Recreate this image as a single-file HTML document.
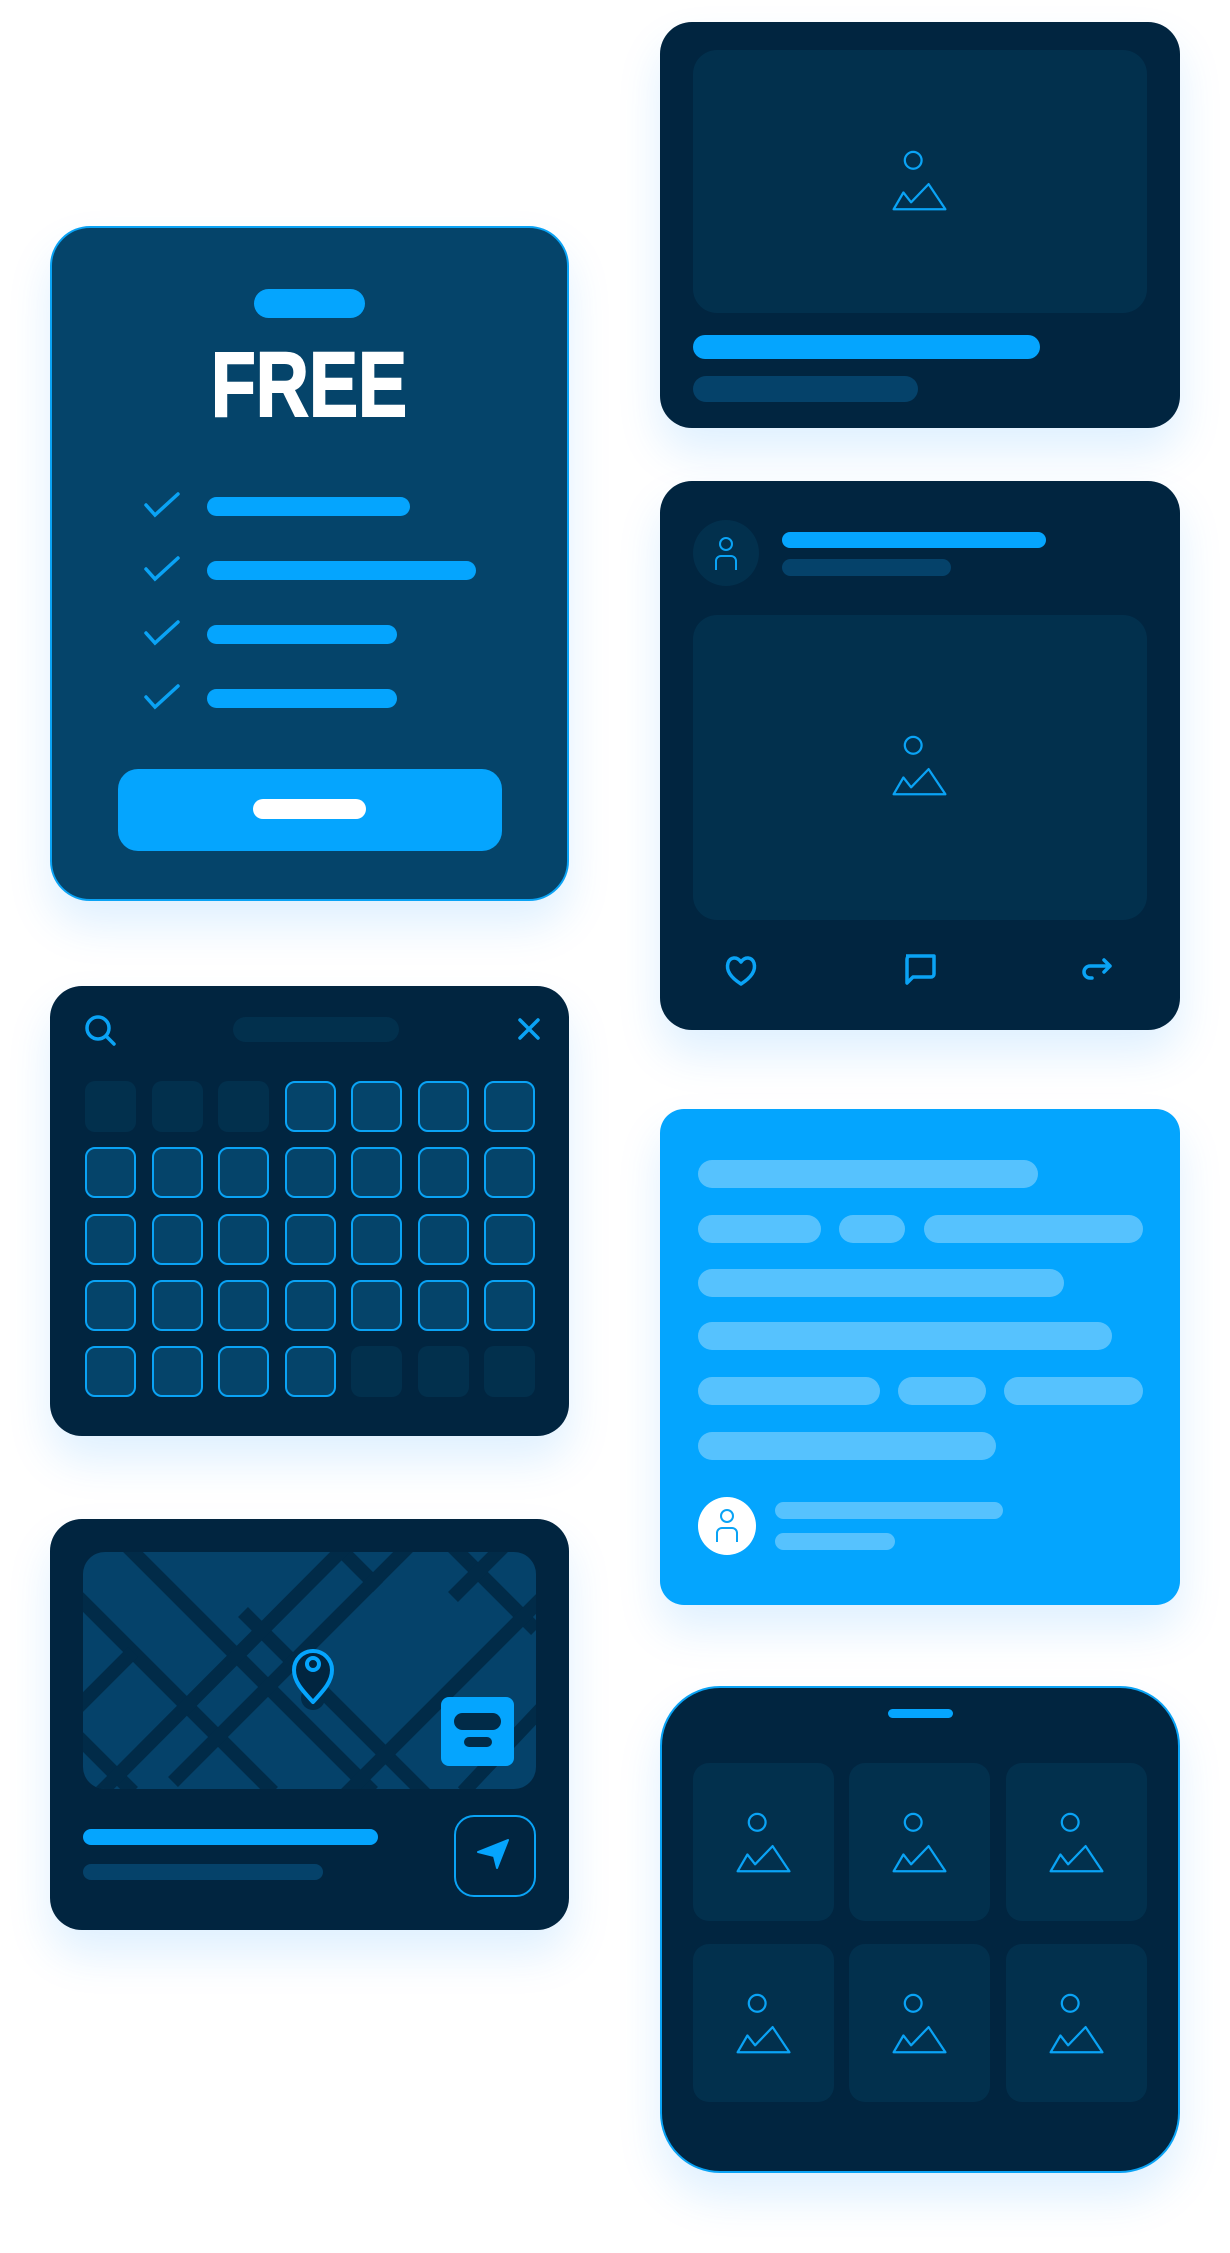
<!DOCTYPE html>
<html><head><meta charset="utf-8"><style>
*{margin:0;padding:0;box-sizing:border-box}
body{width:1230px;height:2253px;background:#fff;position:relative;overflow:hidden;font-family:"Liberation Sans",sans-serif}
.a{position:absolute}
.card{position:absolute;background:#012540;border-radius:32px;box-shadow:0 24px 44px rgba(0,140,255,0.13)}
.pill{position:absolute;border-radius:20px}
.b{background:#05a5fe}
.d{background:#05426a}
.l{background:#56c2fe}
.img{position:absolute;background:#02304d;border-radius:24px}
.cell{position:absolute;width:51px;height:51px;border-radius:10px}
.on{background:#05446a;border:2px solid #0aa3f5}
.off{background:#02304d}
</style></head><body>

<!-- pricing -->
<div class="card" style="left:50px;top:226px;width:519px;height:675px;background:#05446a;border:2px solid #0aa3f5;border-radius:40px"></div>
<div class="pill b" style="left:254px;top:289px;width:111px;height:29px"></div>
<div class="a" style="left:159px;top:335px;width:300px;text-align:center;font-weight:bold;font-size:92px;line-height:100px;color:#fff;transform:scaleX(0.8);-webkit-text-stroke:2px #fff">FREE</div>
<svg class="a" style="left:140px;top:490px" width="50" height="230" viewBox="0 0 50 230">
<g fill="none" stroke="#0aa3f5" stroke-width="3.5" stroke-linecap="round">
<path d="M6 15 L15 25 L38 4"/><path d="M6 79 L15 89 L38 68"/><path d="M6 143 L15 153 L38 132"/><path d="M6 207 L15 217 L38 196"/></g></svg>
<div class="pill b" style="left:207px;top:497px;width:203px;height:19px"></div>
<div class="pill b" style="left:207px;top:561px;width:269px;height:19px"></div>
<div class="pill b" style="left:207px;top:625px;width:190px;height:19px"></div>
<div class="pill b" style="left:207px;top:689px;width:190px;height:19px"></div>
<div class="a b" style="left:118px;top:769px;width:384px;height:82px;border-radius:20px"></div>
<div class="pill" style="left:253px;top:799px;width:113px;height:20px;background:#fff"></div>

<!-- card1 -->
<div class="card" style="left:660px;top:22px;width:520px;height:406px"></div>
<div class="img" style="left:693px;top:50px;width:454px;height:263px"></div>
<svg class="a" style="left:888px;top:142px" width="84" height="73" viewBox="0 0 60 52"><g fill="none" stroke="#0aa3f5" stroke-width="1.6" stroke-linejoin="round"><circle cx="18" cy="13" r="6"/><path d="M4 48 L11 36 L16.5 43 L29 30 L41 48 Z"/></g></svg>
<div class="pill b" style="left:693px;top:335px;width:347px;height:24px"></div>
<div class="pill d" style="left:693px;top:376px;width:225px;height:26px"></div>

<!-- card2 -->
<div class="card" style="left:660px;top:481px;width:520px;height:549px"></div>
<div class="a" style="left:693px;top:520px;width:66px;height:66px;border-radius:50%;background:#02304d"></div>
<svg class="a" style="left:710px;top:533px" width="32" height="40" viewBox="0 0 32 40"><g fill="none" stroke="#0aa3f5" stroke-width="2"><circle cx="16" cy="11" r="6"/><path d="M6 37 V28 a5 5 0 0 1 5 -5 h10 a5 5 0 0 1 5 5 V37"/></g></svg>
<div class="pill b" style="left:782px;top:532px;width:264px;height:16px"></div>
<div class="pill d" style="left:782px;top:559px;width:169px;height:17px"></div>
<div class="img" style="left:693px;top:615px;width:454px;height:305px"></div>
<svg class="a" style="left:888px;top:727px" width="84" height="73" viewBox="0 0 60 52"><g fill="none" stroke="#0aa3f5" stroke-width="1.6" stroke-linejoin="round"><circle cx="18" cy="13" r="6"/><path d="M4 48 L11 36 L16.5 43 L29 30 L41 48 Z"/></g></svg>
<svg class="a" style="left:722px;top:950px" width="40" height="40" viewBox="0 0 40 40"><path d="M19 34 C8 27 4 20 6 13 C8 7 15 6 19 12 C23 6 30 7 32 13 C34 20 30 27 19 34 Z" fill="none" stroke="#0aa3f5" stroke-width="3.5" stroke-linejoin="round"/></svg>
<svg class="a" style="left:900px;top:950px" width="40" height="40" viewBox="0 0 40 40"><path d="M6 6 H34 V24 a3 3 0 0 1 -3 3 H13 L7 33 V9 a3 3 0 0 1 3 -3" fill="none" stroke="#0aa3f5" stroke-width="3.5" stroke-linejoin="round"/></svg>
<svg class="a" style="left:1076px;top:950px" width="40" height="40" viewBox="0 0 40 40"><path d="M28 10 L34 16 L28 22 M34 16 H14 a6 6 0 0 0 0 12 h2" fill="none" stroke="#0aa3f5" stroke-width="3.5" stroke-linecap="round" stroke-linejoin="round"/></svg>

<!-- blue text card -->
<div class="card" style="left:660px;top:1109px;width:520px;height:496px;background:#04a5fe;border-radius:24px"></div>
<div class="pill l" style="left:698px;top:1160px;width:340px;height:28px"></div>
<div class="pill l" style="left:698px;top:1215px;width:123px;height:28px"></div>
<div class="pill l" style="left:839px;top:1215px;width:66px;height:28px"></div>
<div class="pill l" style="left:924px;top:1215px;width:219px;height:28px"></div>
<div class="pill l" style="left:698px;top:1269px;width:366px;height:28px"></div>
<div class="pill l" style="left:698px;top:1322px;width:414px;height:28px"></div>
<div class="pill l" style="left:698px;top:1377px;width:182px;height:28px"></div>
<div class="pill l" style="left:898px;top:1377px;width:88px;height:28px"></div>
<div class="pill l" style="left:1004px;top:1377px;width:139px;height:28px"></div>
<div class="pill l" style="left:698px;top:1432px;width:298px;height:28px"></div>
<div class="a" style="left:698px;top:1497px;width:58px;height:58px;border-radius:50%;background:#fff"></div>
<svg class="a" style="left:711px;top:1506px" width="32" height="40" viewBox="0 0 32 40"><g fill="none" stroke="#0aa3f5" stroke-width="2"><circle cx="16" cy="10" r="6"/><path d="M6 36 V27 a5 5 0 0 1 5 -5 h10 a5 5 0 0 1 5 5 V36"/></g></svg>
<div class="pill l" style="left:775px;top:1502px;width:228px;height:17px"></div>
<div class="pill l" style="left:775px;top:1533px;width:120px;height:17px"></div>

<!-- gallery -->
<div class="card" style="left:660px;top:1686px;width:520px;height:487px;border:2px solid #0aa3f5;border-radius:60px"></div>
<div class="pill b" style="left:888px;top:1709px;width:65px;height:9px"></div>
<div id="gal"></div>

<!-- calendar -->
<div class="card" style="left:50px;top:986px;width:519px;height:450px"></div>
<svg class="a" style="left:82px;top:1012px" width="40" height="40" viewBox="0 0 40 40"><g fill="none" stroke="#0aa3f5" stroke-width="3.5" stroke-linecap="round"><circle cx="16" cy="16" r="11"/><path d="M24 24 L32 32"/></g></svg>
<div class="pill" style="left:233px;top:1017px;width:166px;height:25px;background:#02304d"></div>
<svg class="a" style="left:516px;top:1016px" width="26" height="26" viewBox="0 0 26 26"><path d="M4 4 L22 22 M22 4 L4 22" stroke="#0aa3f5" stroke-width="3.5" stroke-linecap="round"/></svg>
<div id="cal"></div>

<!-- map -->
<div class="card" style="left:50px;top:1519px;width:519px;height:411px"></div>
<svg class="a" style="left:83px;top:1552px" width="453" height="237" viewBox="0 0 453 237">
<defs><clipPath id="c"><rect width="453" height="237" rx="22"/></clipPath></defs>
<g clip-path="url(#c)">
<rect width="453" height="237" fill="#05426a"/>
<g stroke="#012b48" stroke-width="14">
<path d="M45 -5 L290 240"/><path d="M-10 40 L190 240"/><path d="M-10 180 L50 240"/><path d="M255 -5 L295 35"/><path d="M370 -5 L453 78"/><path d="M160 60 L345 245"/>
<path d="M262 -5 L18 240"/><path d="M330 -10 L90 230"/><path d="M460 45 L230 275"/><path d="M460 155 L380 240"/><path d="M-10 160 L50 100"/><path d="M420 -5 L370 45"/>
</g>
<circle cx="230" cy="146" r="12" fill="#012b48"/>
<path d="M230 150 C220 139 211 130 211 118 a19 19 0 0 1 38 0 c0 12 -9 21 -19 32 Z" fill="#012540" stroke="#05a5fe" stroke-width="4" stroke-linejoin="round"/>
<circle cx="230" cy="112" r="6" fill="none" stroke="#05a5fe" stroke-width="4"/>
<rect x="358" y="145" width="73" height="69" rx="8" fill="#05a5fe"/>
<rect x="371" y="161" width="47" height="17" rx="8.5" fill="#012b48"/>
<rect x="381" y="185" width="28" height="10" rx="5" fill="#012b48"/>
</g></svg>
<div class="pill b" style="left:83px;top:1829px;width:295px;height:16px"></div>
<div class="pill d" style="left:83px;top:1864px;width:240px;height:16px"></div>
<div class="a" style="left:454px;top:1815px;width:82px;height:82px;border:2px solid #0aa3f5;border-radius:20px"></div>
<svg class="a" style="left:470px;top:1831px" width="50" height="50" viewBox="0 0 50 50"><path d="M8 21 L38 9 L27 37 L24 25 Z" fill="#05a5fe" stroke="#05a5fe" stroke-width="2" stroke-linejoin="round"/></svg>

<script>
var cal=document.getElementById('cal'),h='';
for(var r=0;r<5;r++)for(var c=0;c<7;c++){var off=(r==0&&c<3)||(r==4&&c>3);
h+='<div class="cell '+(off?'off':'on')+'" style="left:'+(85+c*66.5)+'px;top:'+(1081+r*66.3)+'px"></div>';}
cal.innerHTML=h;
var g='',xs=[693,849,1006],ys=[1763,1944];
for(var i=0;i<2;i++)for(var j=0;j<3;j++){g+='<div class="img" style="left:'+xs[j]+'px;top:'+ys[i]+'px;width:141px;height:158px;border-radius:16px"></div>'+
'<svg class="a" style="left:'+(xs[j]+39)+'px;top:'+(ys[i]+41)+'px" width="84" height="73" viewBox="0 0 60 52"><g fill="none" stroke="#0aa3f5" stroke-width="1.6" stroke-linejoin="round"><circle cx="18" cy="13" r="6"/><path d="M4 48 L11 36 L16.5 43 L29 30 L41 48 Z"/></g></svg>';}
document.getElementById('gal').innerHTML=g;
</script>
</body></html>
